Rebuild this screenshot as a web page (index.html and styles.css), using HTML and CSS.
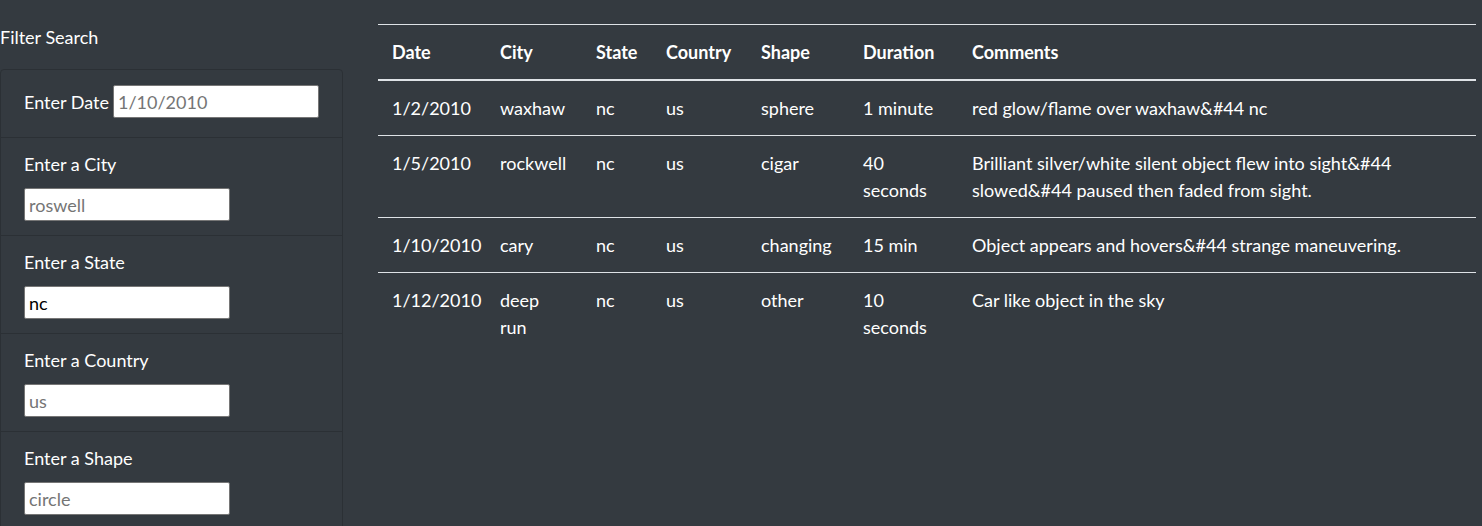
FILE: index.html
```html
<!DOCTYPE html>
<html lang="en">
<head>
<meta charset="utf-8">
<title>UFO Sightings</title>
<link rel="stylesheet" href="styles.css">
</head>
<body>
<div class="page">
  <aside class="sidebar">
    <h4 class="filter-title">Filter Search</h4>
    <ul class="filters">
      <li class="filter filter-inline">
        <label class="filter-label" for="datetime">Enter Date</label>
        <input class="filter-input" id="datetime" type="text" placeholder="1/10/2010">
      </li>
      <li class="filter">
        <label class="filter-label" for="city">Enter a City</label>
        <input class="filter-input" id="city" type="text" placeholder="roswell">
      </li>
      <li class="filter">
        <label class="filter-label" for="state">Enter a State</label>
        <input class="filter-input" id="state" type="text" value="nc" placeholder="nc">
      </li>
      <li class="filter">
        <label class="filter-label" for="country">Enter a Country</label>
        <input class="filter-input" id="country" type="text" placeholder="us">
      </li>
      <li class="filter">
        <label class="filter-label" for="shape">Enter a Shape</label>
        <input class="filter-input" id="shape" type="text" placeholder="circle">
      </li>
    </ul>
  </aside>
  <main class="results">
    <p class="intro">Below are the listing ordered by date, then the state and the city.</p>
    <table class="ufo-table">
      <colgroup>
        <col class="c-date"><col class="c-city"><col class="c-state"><col class="c-country"><col class="c-shape"><col class="c-duration"><col class="c-comments">
      </colgroup>
      <thead>
        <tr><th>Date</th><th>City</th><th>State</th><th>Country</th><th>Shape</th><th>Duration</th><th>Comments</th></tr>
      </thead>
      <tbody>
        <tr><td>1/2/2010</td><td>waxhaw</td><td>nc</td><td>us</td><td>sphere</td><td>1 minute</td><td>red glow/flame over waxhaw&amp;#44 nc</td></tr>
        <tr><td>1/5/2010</td><td>rockwell</td><td>nc</td><td>us</td><td>cigar</td><td>40 seconds</td><td>Brilliant silver/white silent object flew into sight&amp;#44 slowed&amp;#44 paused then faded from sight.</td></tr>
        <tr><td>1/10/2010</td><td>cary</td><td>nc</td><td>us</td><td>changing</td><td>15 min</td><td>Object appears and hovers&amp;#44 strange maneuvering.</td></tr>
        <tr><td>1/12/2010</td><td>deep run</td><td>nc</td><td>us</td><td>other</td><td>10 seconds</td><td>Car like object in the sky</td></tr>
      </tbody>
    </table>
  </main>
</div>
</body>
</html>
```
FILE: styles.css
```css
html, body {
  margin: 0;
  padding: 0;
  background: #343a40;
  color: #ffffff;
  font-family: Lato, "Noto Sans", "Liberation Sans", sans-serif;
  font-size: 18px;
  line-height: 27px;
  overflow: hidden;
  height: 526px;
}

.page {
  display: flex;
  gap: 35px;
  padding-right: 6px;
}

.sidebar {
  width: 343px;
  flex: none;
  padding-top: 24px;
}

.filter-title {
  margin: 0 0 18px 0;
  font-size: 18px;
  font-weight: normal;
  line-height: 27px;
}

.filters {
  list-style: none;
  margin: 0;
  padding: 0;
  border: 1px solid #2b3035;
  border-radius: 4px;
}

.filter {
  display: flex;
  flex-direction: column;
  align-items: flex-start;
  gap: 12px;
  padding: 14px 20px 14px 23px;
  border-top: 1px solid #2b3035;
}

.filter:first-child {
  border-top: none;
}

.filter-inline {
  flex-direction: row;
  align-items: center;
  gap: 0;
  height: 67px;
  box-sizing: border-box;
  padding: 0 20px 4px 23px;
}

.filter-inline .filter-label {
  width: 89px;
  flex: none;
}

.filter-label {
  line-height: 24px;
  color: #ffffff;
}

.filter-input {
  box-sizing: border-box;
  width: 206px;
  height: 33px;
  margin: 0;
  padding: 1px 4px;
  border: 1px solid #767676;
  border-radius: 2px;
  background: #ffffff;
  color: #000000;
  font-family: inherit;
  font-size: 18px;
}

.filter-input::placeholder {
  color: #757575;
}

.results {
  flex: 1;
  min-width: 0;
}

.intro {
  margin: -23px 0 20px 0;
  height: 27px;
  white-space: nowrap;
}

.ufo-table {
  width: 100%;
  border-collapse: collapse;
  table-layout: fixed;
}

.c-date { width: 108px; }
.c-city { width: 96px; }
.c-state { width: 70px; }
.c-country { width: 95px; }
.c-shape { width: 102px; }
.c-duration { width: 109px; }

.ufo-table th,
.ufo-table td {
  padding: 13.5px 14px;
  text-align: left;
  vertical-align: top;
  border-top: 1px solid #dee2e6;
}

.ufo-table th {
  font-weight: bold;
  border-bottom: 2px solid #dee2e6;
}
```
